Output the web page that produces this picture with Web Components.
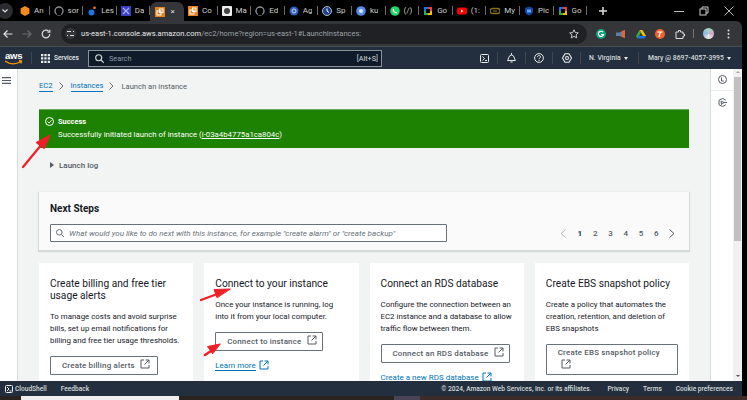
<!DOCTYPE html>
<html><head><meta charset="utf-8"><title>Launch an instance</title>
<style>
html,body{margin:0;height:100%;background:#000;overflow:hidden}
body{font-family:Roboto,"Liberation Sans",sans-serif}
</style></head><body>

<x-page>
  <x-tabstrip slot="tabs">
    <x-tab label="An"><svg viewBox="0 0 10 10"><path d="M5 0l4.400 2.500v5L5 10 .6 7.500v-5z" fill="#f58b1f"/></svg></x-tab>
    <x-tab label="sor"><svg viewBox="0 0 10 10"><circle cx="5" cy="5" r="4" fill="none" stroke="#8a8d91" stroke-width="1.400"/><path d="M3 9V7h4v2" fill="#000"/></svg></x-tab>
    <x-tab label="Les"><svg viewBox="0 0 10 10"><circle cx="4.500" cy="6.500" r="3" fill="#1a73e8"/><circle cx="7.500" cy="1.800" r="1.400" fill="#f4701f"/></svg></x-tab>
    <x-tab label="Da"><svg viewBox="0 0 10 10"><rect width="10" height="10" fill="#3b3fc4"/><path d="M2 2l6 6M8 2L2 8" stroke="#a9b2ff" stroke-width="1.200"/></svg></x-tab>
    <x-tab label="×" active><svg viewBox="0 0 10 10"><rect width="10" height="10" fill="#e8811f"/><rect x="2" y="4" width="4" height="4" fill="none" stroke="#fff"/><rect x="4.500" y="2" width="3.500" height="3.500" fill="none" stroke="#fff"/></svg></x-tab>
    <x-tab label="Co"><svg viewBox="0 0 10 10"><rect width="10" height="10" fill="#e8811f"/><rect x="2" y="4" width="4" height="4" fill="none" stroke="#fff"/><rect x="4.500" y="2" width="3.500" height="3.500" fill="none" stroke="#fff"/></svg></x-tab>
    <x-tab label="Ma"><svg viewBox="0 0 10 10"><rect width="10" height="10" rx="1" fill="#eee"/><circle cx="5" cy="5" r="3" fill="#444"/></svg></x-tab>
    <x-tab label="Ed"><svg viewBox="0 0 10 10"><circle cx="5" cy="5" r="4" fill="none" stroke="#8a8d91" stroke-width="1.400"/><path d="M3 9V7h4v2" fill="#000"/></svg></x-tab>
    <x-tab label="Ag"><svg viewBox="0 0 10 10"><circle cx="5" cy="5" r="4.500" fill="#2c5cb8"/><circle cx="5" cy="5" r="2" fill="none" stroke="#cfdcf5"/></svg></x-tab>
    <x-tab label="Sp"><svg viewBox="0 0 10 10"><circle cx="5" cy="5" r="4.500" fill="#1d3f8f" stroke="#ddd" stroke-width=".8"/><path d="M5 2.500V5l2 1.500" stroke="#fff" fill="none"/></svg></x-tab>
    <x-tab label="ku"><svg viewBox="0 0 10 10"><circle cx="5" cy="5" r="4.800" fill="#5b8bea"/><circle cx="5" cy="5" r="2" fill="#dbe6fb"/></svg></x-tab>
    <x-tab label="(/)"><svg viewBox="0 0 10 10"><circle cx="5" cy="5" r="4.800" fill="#25d366"/><path d="M3.200 3c0 2.500 1.500 3.800 3.800 3.800" stroke="#fff" stroke-width="1.200" fill="none"/></svg></x-tab>
    <x-tab label="Go"><svg viewBox="0 0 10 10"><path d="M1 1h4v4H1z" fill="#1a73e8"/><path d="M5 1h4v4H5z" fill="#ea4335"/><path d="M1 5h4v4H1z" fill="#34a853"/><path d="M5 5h4v4H5z" fill="#fbbc05"/><rect x="3" y="3" width="4" height="4" fill="#000"/></svg></x-tab>
    <x-tab label="(1:"><svg viewBox="0 0 10 10"><rect y="1.500" width="10" height="7" rx="2" fill="#f00"/><path d="M4 3.500L6.500 5 4 6.500z" fill="#fff"/></svg></x-tab>
    <x-tab label="My"><svg viewBox="0 0 10 10"><rect y="2.500" width="10" height="5" rx="2.500" fill="none" stroke="#8a7414" stroke-width="1.300"/><path d="M3 5h4" stroke="#8a7414"/></svg></x-tab>
    <x-tab label="Pic"><svg viewBox="0 0 10 10"><path d="M5 .5l4 1.500v3.500c0 2-2 3.500-4 4-2-.5-4-2-4-4V2z" fill="#0d47a1"/><rect x="3" y="3.500" width="4" height="3" fill="#6ea0ee"/></svg></x-tab>
    <x-tab label="Go"><svg viewBox="0 0 10 10"><path d="M1 1h4v4H1z" fill="#1a73e8"/><path d="M5 1h4v4H5z" fill="#ea4335"/><path d="M1 5h4v4H1z" fill="#34a853"/><path d="M5 5h4v4H5z" fill="#fbbc05"/><rect x="3" y="3" width="4" height="4" fill="#000"/></svg></x-tab>
  </x-tabstrip>
  <x-toolbar slot="toolbar"></x-toolbar>
  <x-awsnav slot="nav"></x-awsnav>
  <x-sidebar slot="side"></x-sidebar>

  <x-main slot="main">
    <x-crumbs></x-crumbs>
    <x-flash></x-flash>
    <x-log></x-log>
    <x-next></x-next>
    <x-cards>
      <x-card heading="Create billing and free tier usage alerts" body="To manage costs and avoid surprise bills, set up email notifications for billing and free tier usage thresholds." action="Create billing alerts" bw="108"></x-card>
      <x-card heading="Connect to your instance" body="Once your instance is running, log into it from your local computer." action="Connect to instance" bw="108" link="Learn more"></x-card>
      <x-card heading="Connect an RDS database" body="Configure the connection between an EC2 instance and a database to allow traffic flow between them." action="Connect an RDS database" bw="129" link="Create a new RDS database"></x-card>
      <x-card heading="Create EBS snapshot policy" body="Create a policy that automates the creation, retention, and deletion of EBS snapshots" action="Create EBS snapshot policy" bw="132" wrapbtn></x-card>
    </x-cards>
  </x-main>

  <x-panel slot="panel"></x-panel>
  <x-scroll slot="scroll"></x-scroll>
  <x-footer slot="footer"></x-footer>
  <x-arrows slot="over"></x-arrows>
</x-page>

<script>
const ext = c => `<svg width="10" height="10" viewBox="0 0 10 10" fill="none" stroke="${c}" stroke-width="1"><path d="M4 1H1v8h8V6"/><path d="M5.500 1H9v3.500M9 1L4.500 5.500"/></svg>`;
const def = (name, html) => customElements.define(name, class extends HTMLElement {
  constructor(){ super(); this.attachShadow({mode:'open'}); }
  connectedCallback(){ this.shadowRoot.innerHTML = typeof html === 'function' ? html(this) : html; }
});

def('x-page', `<style>
:host{display:flex;flex-direction:column;width:747px;height:400px;position:relative;overflow:hidden;background:#000}
.w{display:flex;flex-direction:column;width:742px}
.mid{display:flex;height:312px}
.strip{height:4px;display:flex;background:#2a2320}
.strip i:nth-child(1){width:21px}.strip i:nth-child(2){width:158px;background:#eee}.strip i:nth-child(3){width:215px}.strip i:nth-child(4){width:26px;background:#4a4257}.strip i:nth-child(5){flex:1;background:#3b2c2a}
</style>
<slot name="tabs"></slot>
<div class="w"><slot name="toolbar"></slot><slot name="nav"></slot>
<div class="mid"><slot name="side"></slot><slot name="main"></slot><slot name="panel"></slot><slot name="scroll"></slot></div>
<slot name="footer"></slot></div>
<div class="strip"><i></i><i></i><i></i><i></i><i></i></div>
<slot name="over"></slot>`);

def('x-tabstrip', `<style>
:host{display:flex;align-items:flex-end;height:21px;background:#000;color:#ddd;font-size:8px;flex:none}
.more{width:16px;align-self:center;display:flex}
.more b{width:16px;height:16px;margin-left:-3px;border-radius:50%;background:#2b2c2f;display:flex;align-items:center;justify-content:center}
.plus{margin-left:6px;width:20px;height:21px;display:flex;align-items:center;justify-content:center}
.ctl{margin-left:auto;display:flex;align-items:center;height:21px;gap:15px;padding-right:13px}
</style>
<div class="more"><b><svg width="6" height="4" viewBox="0 0 6 4" fill="none" stroke="#ddd" stroke-width="1.200"><path d="M.5.500L3 3 5.500.500"/></svg></b></div>
<slot></slot>
<div class="plus"><svg width="8" height="8" viewBox="0 0 8 8" stroke="#ddd" stroke-width="1.500"><path d="M4 0v8M0 4h8"/></svg></div>
<div class="ctl">
<svg width="10" height="10" viewBox="0 0 10 10" stroke="#bbb"><path d="M0 5.500h10"/></svg>
<svg width="10" height="10" viewBox="0 0 10 10" fill="none" stroke="#ccc"><rect x="1" y="3" width="6" height="6"/><path d="M3 3V1h6v6H7"/></svg>
<svg width="10" height="10" viewBox="0 0 10 10" stroke="#bbb"><path d="M.5.500l9 9M9.500.500l-9 9"/></svg>
</div>`);

def('x-tab', t => `<style>
:host{display:flex;align-items:center;width:33.600px;height:21px;box-sizing:border-box;padding-left:4px;gap:4px;position:relative;font-family:Roboto,sans-serif;font-size:8px;color:#cfcfcf;white-space:nowrap;flex:none}
:host([active]){background:#35363a;border-radius:7px 7px 0 0;height:19px;padding-left:5px;gap:5px;color:#ddd}
:host(:not([active]))::after{content:"";position:absolute;right:0;top:6px;height:9px;width:1px;background:#6a6a6a}
::slotted(svg){width:10px;height:10px;flex:none}
span{display:block;max-width:13px;overflow:hidden}
</style><slot></slot><span>${t.getAttribute('label')}</span>`);

def('x-toolbar', `<style>
:host{display:flex;align-items:center;height:25px;background:#35363a;border-radius:0 6px 0 0;position:relative;flex:none}
svg{flex:none;display:block}
.nav{display:flex;align-items:center;gap:9px;padding-left:3px;width:61px;box-sizing:border-box}
.om{width:526px;height:20px;border-radius:10px;background:#202124;display:flex;align-items:center;box-sizing:border-box;padding:0 8px 0 4px;font:7.500px Roboto,sans-serif;color:#9aa0a6;white-space:nowrap;gap:5px;flex:none}
.om b{font-weight:400;color:#e8eaed}
.om .tune{width:11px;height:11px;border-radius:50%;background:#35363a;display:flex;align-items:center;justify-content:center;flex:none}
.om span{flex:1}
.ex{display:flex;align-items:center;margin-left:9px;gap:9.800px}
.dv{width:1px;height:9px;background:#777;margin:0 9px 0 8px}
.ava{width:11px;height:11px;border-radius:50%;background:conic-gradient(#9fd8c8,#d9a4c9,#e9e9e9,#90b9e0,#9fd8c8);flex:none}
.men{margin-left:13px}
</style>
<div class="nav">
<svg width="10" height="10" viewBox="0 0 10 10" fill="none" stroke="#ddd" stroke-width="1.200"><path d="M9.500 5H1M4.500 1.500L1 5l3.500 3.500"/></svg>
<svg width="10" height="10" viewBox="0 0 10 10" fill="none" stroke="#6a6b6e" stroke-width="1.200"><path d="M.5 5H9M5.500 1.500L9 5 5.500 8.500"/></svg>
<svg width="10" height="10" viewBox="0 0 10 10" fill="none" stroke="#ddd" stroke-width="1.200"><path d="M8.800 5A3.800 3.800 0 1 1 7.700 2.300"/><path d="M8.800.8v2.400H6.400" /></svg>
</div>
<div class="om"><div class="tune"><svg width="7" height="7" viewBox="0 0 7 7" stroke="#ddd"><path d="M0 1.500h4M6 1.500h1M0 5.500h1M3 5.500h4"/></svg></div>
<span><b>us-east-1.console.aws.amazon.com</b>/ec2/home?region=us-east-1#LaunchInstances:</span>
<svg width="10" height="10" viewBox="0 0 10 10" fill="none" stroke="#ddd" stroke-width=".9"><path d="M5 .8l1.300 2.800 3 .3-2.200 2 .6 3L5 7.400 2.300 8.900l.6-3-2.200-2 3-.3z"/></svg></div>
<div class="ex">
<svg width="10" height="10" viewBox="0 0 10 10"><circle cx="5" cy="5" r="5" fill="#15a37f"/><path d="M7 3.200A2.600 2.600 0 1 0 7.500 5.500H5.200" fill="none" stroke="#fff" stroke-width="1.200"/></svg>
<svg width="10" height="10" viewBox="0 0 10 10"><path d="M0 3.500h3.500L9 1v8L3.500 7H0z" fill="#5a7fa8"/><path d="M5.500 2.200L9 1v8L5.500 7.800z" fill="#e0663a"/></svg>
<svg width="10" height="10" viewBox="0 0 10 10"><path d="M3.500 1h3L10 7H7z" fill="#fbbc05"/><path d="M3.500 1L0 7l1.500 2.500L5 3.500z" fill="#34a853"/><path d="M1.500 9.500h7L10 7H3z" fill="#1a73e8"/></svg>
<svg width="10" height="10" viewBox="0 0 10 10"><circle cx="5" cy="5" r="5" fill="#f0622d"/><path d="M2.500 3h5M5.500 3L4 8" stroke="#fff" stroke-width="1.200" fill="none"/></svg>
<svg width="10" height="10" viewBox="0 0 10 10" fill="none" stroke="#ddd"><path d="M1 3h2.500V1.500h2V3H8v2h1.500v2H8v2.500H1z"/></svg>
</div>
<div class="dv"></div><div class="ava"></div>
<svg class="men" width="3" height="10" viewBox="0 0 3 10" fill="#ddd"><circle cx="1.500" cy="1.500" r="1"/><circle cx="1.500" cy="5" r="1"/><circle cx="1.500" cy="8.500" r="1"/></svg>`);

def('x-awsnav', `<style>
:host{display:flex;align-items:center;height:23px;background:#232f3e;border-top:1px solid #4a4d52;box-sizing:border-box;color:#e9ebed;font:500 6.800px Roboto,sans-serif;white-space:nowrap;flex:none}
svg{display:block;flex:none}
.logo{position:relative;width:18px;margin-left:5px;height:17px;font:700 9.500px/11px "Liberation Sans",sans-serif;color:#fff;letter-spacing:-.2px;flex:none}
.logo svg{position:absolute;left:0;top:10px}
.dv{width:1px;height:12px;background:#414750;flex:none}
.srv{display:flex;align-items:center;gap:4px;margin-left:9px;width:47px;flex:none;font-size:6.500px}
.sb{width:294px;flex:none;height:17px;box-sizing:border-box;background:#0f1b2a;border:1px solid #879596;display:flex;align-items:center;padding:0 3px 0 6px;gap:5px;font-weight:400;color:#8d99a8;font-size:7.300px}
.sb span{flex:1}.sb em{font-style:normal;color:#d5dbdb;flex:none}
.r{display:flex;align-items:center;height:100%;margin-left:92px;flex:none}
.ic{width:26px;display:flex;justify-content:center;flex:none}
.sec{display:flex;align-items:center;gap:3px;color:#d5dbdb;flex:none}
.c{width:0;height:0;border:2.500px solid transparent;border-top:3px solid #e9ebed;border-bottom:0}
</style>
<div class="logo">aws<svg width="18" height="6" viewBox="0 0 18 6" fill="none" stroke="#f90" stroke-width="1.300"><path d="M0 1c5 3.500 11 3.500 16 .5M14 .5l2.500.5-.7 2.500"/></svg></div>
<div style="width:8px;flex:none"></div><div class="dv"></div>
<div class="srv"><svg width="9" height="9" viewBox="0 0 9 9" fill="#e9ebed"><path d="M0 0h2.300v2.300H0zM3.300 0h2.300v2.300H3.300zM6.700 0H9v2.300H6.700zM0 3.300h2.300v2.300H0zM3.300 3.300h2.300v2.300H3.300zM6.700 3.300H9v2.300H6.700zM0 6.700h2.300V9H0zM3.300 6.700h2.300V9H3.300zM6.700 6.700H9V9H6.700z"/></svg>Services</div>
<div class="sb"><svg width="9" height="9" viewBox="0 0 9 9" fill="none" stroke="#d5dbdb" stroke-width="1.100"><circle cx="3.700" cy="3.700" r="3"/><path d="M6 6l2.800 2.800"/></svg><span>Search</span><em>[Alt+S]</em></div>
<div class="r">
<div class="ic" style="width:20px"><svg width="9" height="9" viewBox="0 0 9 9" fill="none" stroke="#e9ebed"><rect x=".5" y=".5" width="8" height="8" rx="1"/><path d="M2.500 2.500L4.500 4.500 2.500 6.500M5 6.500h2"/></svg></div><div style="width:3px;flex:none"></div><div class="dv"></div>
<div class="ic" style="width:27px"><svg width="9" height="10" viewBox="0 0 9 10" fill="none" stroke="#e9ebed"><path d="M.5 7.500c1.300-1.200 1-5.500 4-5.500s2.700 4.300 4 5.500zM3.300 9h2.400M4.500 0v2"/></svg></div><div class="dv"></div>
<div class="ic"><svg width="10" height="10" viewBox="0 0 10 10" fill="none" stroke="#e9ebed"><circle cx="5" cy="5" r="4.400"/><path d="M3.500 4c0-2 3-2 3 0 0 1-1.500 1-1.500 2.200M5 7v1"/></svg></div><div class="dv"></div>
<div class="ic" style="width:27px"><svg width="10" height="10" viewBox="0 0 10 10" fill="none" stroke="#e9ebed" stroke-width="1.100"><path d="M3 .8h4L9.500 5 7 9.200H3L.5 5z"/><circle cx="5" cy="5" r="1.500"/></svg></div><div class="dv"></div>
<div class="sec" style="margin-left:8px;width:49px">N. Virginia<i class="c"></i></div><div class="dv"></div>
<div class="sec" style="margin-left:9px">Mary @ 8697-4057-3995<i class="c"></i></div>
</div>`);

def('x-sidebar', `<style>
:host{display:block;width:18px;background:#fff;border-right:1px solid #d5dbdb;box-sizing:border-box;flex:none;padding:8px 0 0 2px}
svg{display:block}
</style><svg width="9" height="7" viewBox="0 0 9 7" stroke="#545b64" stroke-width="1.100"><path d="M0 .6h9M0 3.500h9M0 6.400h9"/></svg>`);

def('x-main', `<style>
:host{display:block;flex:1;min-width:0;background:#f2f3f3;box-sizing:border-box;padding:11px 21px 0;overflow:hidden;font-family:Roboto,"Liberation Sans",sans-serif;color:#16191f}
</style><slot></slot>`);

def('x-crumbs', `<style>
:host{display:flex;align-items:center;height:12px;font-size:7.600px;color:#545b64;white-space:nowrap}
a{color:#0073bb;border-bottom:1px solid #0073bb;line-height:10px}
svg{margin:0 7px 0 6px}
</style><a>EC2</a><svg width="5" height="8" viewBox="0 0 5 8" fill="none" stroke="#687078"><path d="M.5.500L4 4 .5 7.500"/></svg><a>Instances</a><svg width="5" height="8" viewBox="0 0 5 8" fill="none" stroke="#687078"><path d="M.5.500L4 4 .5 7.500"/></svg><span>Launch an instance</span>`);

def('x-flash', `<style>
:host{display:flex;height:39px;margin-top:17px;background:#1d8102;border-top:1px solid #6bab5a;box-sizing:border-box;color:#fff;font-size:7.800px;padding:6px 0 0 6px;gap:4px;white-space:nowrap}
svg{margin-top:1px;flex:none}
b{display:block;line-height:12px;font-size:7.400px}
p{margin:1px 0 0;line-height:12px}
u{text-underline-offset:1px}
</style><svg width="9" height="9" viewBox="0 0 9 9" fill="none" stroke="#fff"><circle cx="4.500" cy="4.500" r="4"/><path d="M2.500 4.500l1.500 1.500 2.500-2.700"/></svg><div><b>Success</b><p>Successfully initiated launch of instance (<u>i-03a4b4775a1ca804c</u>)</p></div>`);

def('x-log', `<style>
:host{display:flex;align-items:center;height:12px;margin-top:11px;padding-left:11px;gap:5px;font-size:8px;font-weight:500;color:#545b64}
i{width:0;height:0;border:3px solid transparent;border-left:4px solid #545b64;border-right:0}
</style><i></i>Launch log`);

def('x-next', `<style>
:host{display:block;height:58px;margin-top:21px;background:#fafafa;box-shadow:0 1px 1px 1px #d5dbdb;box-sizing:border-box;padding:10px 11px 0;color:#16191f}
h2{margin:0;font-size:10px;line-height:13px;font-weight:700}
.row{display:flex;align-items:center;margin-top:9px}
.in{width:397px;height:18px;box-sizing:border-box;background:#fff;border:1px solid #687078;border-radius:1px;display:flex;align-items:center;gap:5px;padding-left:5px;font-style:italic;color:#687078;font-size:8px;white-space:nowrap;overflow:hidden;flex:none}
.pg{margin-left:auto;display:flex;align-items:center;font-size:8px;color:#545b64;font-weight:500;padding-right:3px}
.pg span{width:15.300px;text-align:center}.pg .on{color:#16325c;font-weight:700}
svg{flex:none}
</style><h2>Next Steps</h2><div class="row"><div class="in"><svg width="8" height="8" viewBox="0 0 8 8" fill="none" stroke="#687078"><circle cx="3.300" cy="3.300" r="2.800"/><path d="M5.300 5.300L8 8"/></svg>What would you like to do next with this instance, for example "create alarm" or "create backup"</div>
<div class="pg"><svg width="6" height="9" viewBox="0 0 6 9" fill="none" stroke="#aab7b8" style="margin-right:6px"><path d="M5.500.5L1 4.500l4.500 4"/></svg><span class="on">1</span><span>2</span><span>3</span><span>4</span><span>5</span><span>6</span><svg width="6" height="9" viewBox="0 0 6 9" fill="none" stroke="#545b64" style="margin-left:5px"><path d="M.5.5L5 4.500l-4.500 4"/></svg></div></div>`);

def('x-cards', `<style>
:host{display:grid;grid-template-columns:repeat(4,1fr);gap:11px;margin-top:13px}
</style><slot></slot>`);

def('x-card', c => {
  const link = c.getAttribute('link');
  const wrap = c.hasAttribute('wrapbtn');
  return `<style>
:host{display:block;background:#fff;min-height:118px;box-sizing:border-box;padding:15px 11px 0;color:#16191f}
h3{margin:0;font-size:10.200px;line-height:12px;font-weight:400;color:#16191f}
p{margin:9px 0 0;font-size:7.900px;line-height:12px;color:#16191f}
.b{display:block;box-sizing:border-box;width:${c.getAttribute('bw')}px;margin-top:9px;border:1px solid #687078;border-radius:1px;background:#fff;padding:2px ${wrap ? 10 : 4}px 2px 11px;font-size:7.900px;letter-spacing:.2px;font-weight:500;line-height:12px;color:#545b64;white-space:${wrap ? 'normal' : 'nowrap'}}
.b svg{vertical-align:-1.500px;margin-left:3px}
.l{display:block;margin-top:9px;font-size:8px;line-height:11px;color:#0073bb;white-space:nowrap}
.l span{border-bottom:1px solid #0073bb}.l svg{vertical-align:-1.500px;margin-left:1px}
</style><h3>${c.getAttribute('heading')}</h3><p>${c.getAttribute('body')}</p><div class="b">${c.getAttribute('action')} ${ext('#545b64')}</div>${link ? `<div class="l"><span>${link}</span> ${ext('#0073bb')}</div>` : ''}`;
});

def('x-panel', `<style>
:host{display:flex;flex-direction:column;width:23px;background:#fff;border-left:1px solid #d5dbdb;box-sizing:border-box;flex:none}
div{height:22px;display:flex;align-items:center;justify-content:center;border-bottom:1px solid #eaeded;box-sizing:border-box}
div+div{border:0}
</style><div><svg width="9" height="9" viewBox="0 0 9 9" fill="none" stroke="#545b64"><circle cx="4.500" cy="4.500" r="4"/><path d="M3.500 2.500v3.500h2.200"/></svg></div>
<div><svg width="9" height="9" viewBox="0 0 9 9" fill="none" stroke="#545b64"><path d="M7.700 2.200L4.500.4 1 2.300v4.400l3.500 1.900 3.300-1.900"/><path d="M3 3l3 1.500L3.500 6.500z"/><path d="M6 4.500h3"/></svg></div>`);

def('x-scroll', `<style>
:host{display:flex;flex-direction:column;width:9px;background:#f1f1f1;flex:none;justify-content:space-between;position:relative}
.t{height:8px;position:relative}
.t::after{content:"";position:absolute;left:2.500px;top:2px;border:2px solid transparent;border-bottom:2.500px solid #a3a3a3;border-top:0}
.h{position:absolute;left:1px;right:1px;top:8px;height:164px;background:#c1c1c1}
.d{height:8px;position:relative}
.d::after{content:"";position:absolute;left:2.500px;top:2px;border:2px solid transparent;border-top:2.500px solid #505050;border-bottom:0}
</style><div class="t"></div><div class="h"></div><div class="d"></div>`);

def('x-footer', `<style>
:host{display:flex;align-items:center;height:15px;background:#232f3e;color:#d5dbdb;font:500 6.600px Roboto,sans-serif;white-space:nowrap;flex:none;padding-left:5px}
svg{margin-right:2px;flex:none}
.f{margin-left:14px}
.r{margin-left:auto;display:flex;padding-right:9px;gap:14px}
.r span:first-child{margin-right:2px}
</style><svg width="8" height="8" viewBox="0 0 8 8" fill="none" stroke="#e9ebed"><rect x=".5" y=".5" width="7" height="7" rx="1"/><path d="M2 2l2 2-2 2M4.500 6h2"/></svg>CloudShell<span class="f">Feedback</span>
<div class="r"><span>© 2024, Amazon Web Services, Inc. or its affiliates.</span><span>Privacy</span><span>Terms</span><span>Cookie preferences</span></div>`);

def('x-arrows', `<style>
:host{position:absolute;left:0;top:0;width:747px;height:400px;pointer-events:none;display:block}
svg{display:block}
</style><svg width="747" height="400" viewBox="0 0 747 400" fill="#f01f25" stroke="#f01f25" stroke-linecap="round">
<path d="M23 167L42 144" stroke-width="2.200"/><path d="M50 135L36 142.500l8 6z" stroke-width="1"/>
<path d="M201 300L220 293" stroke-width="2.200"/><path d="M230 289L214 289.500l3 8z" stroke-width="1"/>
<path d="M205 355L214 349" stroke-width="2.600"/><path d="M220 344L207.500 346.500l5 7z" stroke-width="1"/>
</svg>`);
</script>
</body></html>
